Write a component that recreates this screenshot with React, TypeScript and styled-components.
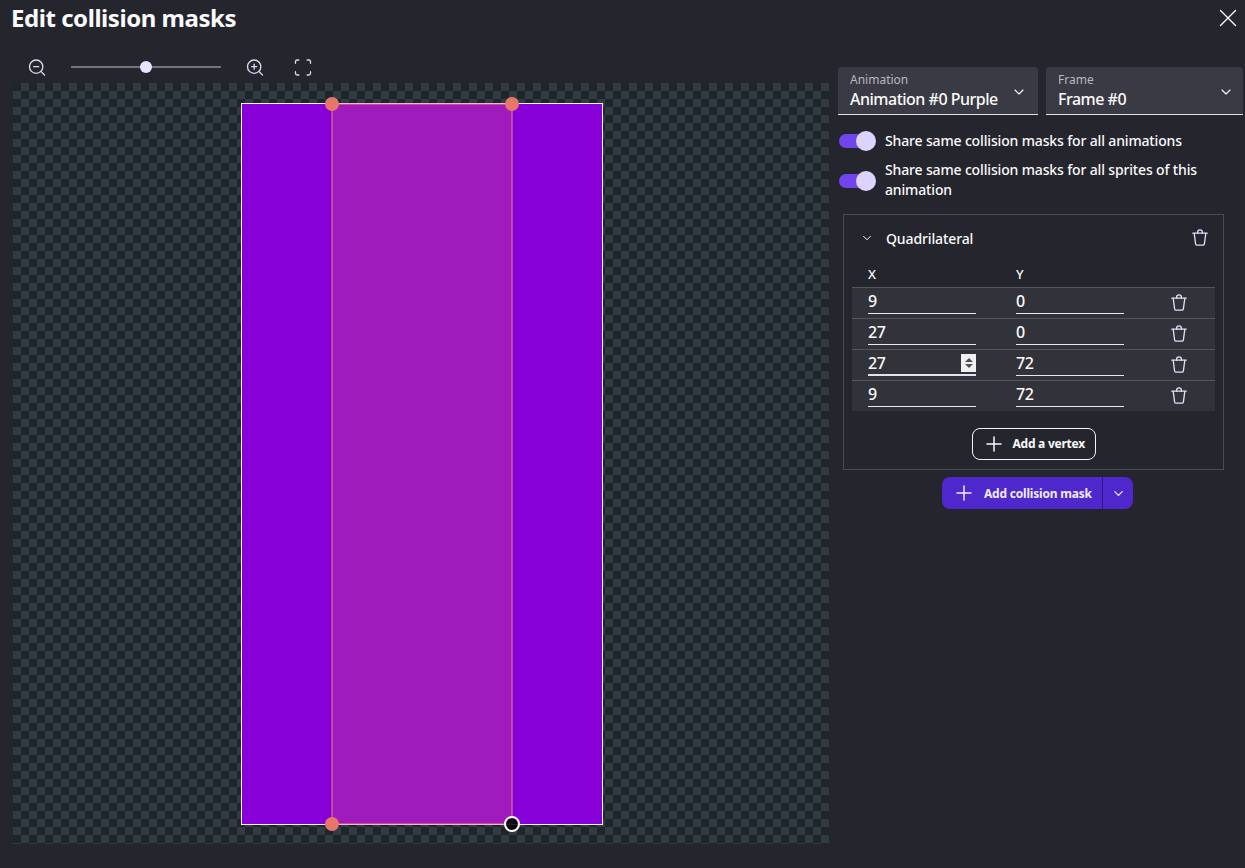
import { createGlobalStyle, styled } from 'styled-components'
import { ChevronDown, Plus, Scan, X, ZoomIn, ZoomOut } from 'lucide-react'

const GlobalStyle = createGlobalStyle`
  html, body {
    margin: 0;
    padding: 0;
    background: #25252e;
  }
  * {
    box-sizing: border-box;
  }
`

const Page = styled.div`
  width: 1245px;
  height: 868px;
  overflow: hidden;
  background: #25252e;
  color: #fafafa;
  font-family: 'Noto Sans', 'Liberation Sans', sans-serif;
  display: flex;
  flex-direction: column;
`

const TitleBar = styled.div`
  height: 36px;
  padding: 0 2px 0 11px;
  display: flex;
  align-items: center;
  justify-content: space-between;
`

const Title = styled.h1`
  margin: 0;
  font-size: 24px;
  line-height: 36px;
  font-weight: 700;
  letter-spacing: -0.45px;
`

const Body = styled.div`
  flex: 1;
  display: flex;
  padding-left: 13px;
  gap: 9px;
`

const Editor = styled.div`
  width: 816px;
  display: flex;
  flex-direction: column;
`

const Toolbar = styled.div`
  height: 47px;
  padding: 15px 0 0 14px;
  display: flex;
  align-items: center;
  color: #dcd8f0;
`

const ToolIcon = styled.span<{ $gap: number }>`
  width: 20px;
  height: 20px;
  margin-right: ${(p) => p.$gap}px;
  display: flex;
  align-items: center;
  justify-content: center;
`

const SliderTrack = styled.div`
  width: 150px;
  height: 2px;
  margin-right: 24px;
  background: #73727f;
  display: flex;
  align-items: center;
  justify-content: center;
`

const SliderThumb = styled.div`
  width: 12px;
  height: 12px;
  border-radius: 50%;
  background: #e8e4ff;
`

const Canvas = styled.div`
  width: 816px;
  height: 761px;
  flex: none;
  padding: 21px 0 0 1px;
  display: flex;
  justify-content: center;
  align-items: flex-start;
  background-color: #1f2629;
  background-image: conic-gradient(
    #303b44 25%,
    #1f2629 0 50%,
    #303b44 0 75%,
    #1f2629 0
  );
  background-size: 16px 16px;
`

const Sprite = styled.div`
  position: relative;
  width: 360px;
  height: 720px;
  background: #8800d8;
  outline: 1px solid #f4f4ff;
`

const MaskLayer = styled.svg`
  position: absolute;
  top: 0;
  left: 0;
  overflow: visible;
`

const Side = styled.div`
  width: 405px;
  padding-top: 31px;
  display: flex;
  flex-direction: column;
`

const SelectRow = styled.div`
  display: flex;
  gap: 8px;
  margin-bottom: 16px;
`

const Select = styled.div<{ $width: number }>`
  position: relative;
  width: ${(p) => p.$width}px;
  height: 48px;
  padding: 5px 12px 0;
  background: #3a3a44;
  border-bottom: 1px solid #e0e0e6;
  border-radius: 4px 4px 0 0;
`

const SelectLabel = styled.div`
  font-size: 12px;
  line-height: 15px;
  color: #b8b8c0;
`

const SelectValue = styled.div`
  font-size: 16px;
  line-height: 25px;
  font-weight: 500;
  letter-spacing: -0.5px;
  white-space: nowrap;
`

const SelectCaret = styled.span<{ $right: number }>`
  position: absolute;
  top: 17px;
  right: ${(p) => p.$right}px;
  display: flex;
`

const ToggleRow = styled.div`
  display: flex;
  align-items: center;
  gap: 9px;
  margin: 0 0 9px 1px;
`

const Toggle = styled.div<{ $low?: boolean }>`
  flex: none;
  width: 37px;
  height: 20px;
  margin-top: ${(p) => (p.$low ? 2 : 0)}px;
  position: relative;
  display: flex;
  align-items: center;
`

const ToggleTrack = styled.div`
  width: 31px;
  height: 14px;
  border-radius: 7px;
  background: #7046ec;
`

const ToggleThumb = styled.div`
  position: absolute;
  right: 0;
  top: 0;
  width: 20px;
  height: 20px;
  border-radius: 50%;
  background: #dcd3ff;
`

const ToggleLabel = styled.div`
  width: 325px;
  font-size: 14px;
  line-height: 20px;
  font-weight: 500;
  letter-spacing: -0.15px;
`

const MaskPanel = styled.div`
  width: 381px;
  height: 256px;
  margin: 5px 0 7px 5px;
  padding: 0 8px;
  border: 1px solid #4a4a52;
`

const PanelHeader = styled.div`
  height: 46px;
  padding: 0 6px 0 8px;
  display: flex;
  align-items: center;
`

const PanelTitle = styled.div`
  flex: 1;
  margin-left: 12px;
  font-size: 14px;
  font-weight: 500;
  letter-spacing: -0.12px;
`

const ColumnHeads = styled.div`
  height: 26px;
  padding-left: 16px;
  display: flex;
  align-items: center;
  font-size: 13px;
  font-weight: 500;
`

const ColumnHead = styled.div`
  width: 148px;
`

const VertexRow = styled.div`
  height: 31px;
  padding-left: 16px;
  display: flex;
  align-items: flex-start;
  background: #32323b;
  border-top: 1px solid #55555a;
  &:last-of-type {
    height: 32px;
    border-bottom: 1px solid #55555a;
  }
`

const VertexField = styled.div<{ $focused?: boolean }>`
  position: relative;
  width: 108px;
  height: 26px;
  margin-right: 40px;
  font-size: 16px;
  line-height: 26px;
  font-weight: 500;
  letter-spacing: -0.5px;
  border-bottom: ${(p) => (p.$focused ? '2px solid #dfe3ee' : '1px solid #e8e8f0')};
`

const Spinner = styled.div`
  position: absolute;
  right: 0;
  top: 4px;
  width: 15px;
  height: 18px;
  background: #f0f0f0;
  display: flex;
  flex-direction: column;
  align-items: center;
  justify-content: center;
  gap: 2px;
`

const Arrow = styled.span<{ $down?: boolean }>`
  width: 0;
  height: 0;
  border-left: 4px solid transparent;
  border-right: 4px solid transparent;
  border-top: ${(p) => (p.$down ? '4px solid #505050' : 'none')};
  border-bottom: ${(p) => (p.$down ? 'none' : '4px solid #505050')};
`

const RowAction = styled.span`
  margin: 6px 0 0 6px;
  display: flex;
  color: #e4def8;
`

const HeaderAction = styled.span`
  display: flex;
  color: #e4def8;
`

const PanelFooter = styled.div`
  padding-top: 17px;
  display: flex;
  justify-content: center;
`

const OutlineButton = styled.div`
  width: 124px;
  height: 32px;
  padding-left: 9px;
  display: flex;
  align-items: center;
  gap: 7px;
  border: 1px solid #f4f4f8;
  border-radius: 8px;
  font-size: 12px;
  line-height: 14px;
  font-weight: 700;
  letter-spacing: -0.25px;
  white-space: nowrap;
`

const SplitRow = styled.div`
  padding-left: 104px;
  display: flex;
`

const SplitButton = styled.div`
  height: 32px;
  width: 191px;
  display: flex;
  background: #4f28cd;
  border-radius: 8px;
  font-size: 12px;
  font-weight: 700;
  letter-spacing: -0.2px;
  color: #f0ecff;
  white-space: nowrap;
`

const SplitMain = styled.div`
  width: 161px;
  padding-left: 10px;
  display: flex;
  align-items: center;
  gap: 8px;
  border-right: 1px solid #2e1a80;
`

const SplitCaret = styled.div`
  flex: 1;
  display: flex;
  align-items: center;
  justify-content: center;
`

const Trash = ({ size = 18 }: { size?: number }) => (
  <svg width={size} height={size} viewBox="0 0 18 18" fill="none" stroke="currentColor" strokeWidth="1.3" strokeLinecap="round" strokeLinejoin="round">
    <path d="M1.8 4.2h14.4" />
    <path d="M6.6 4.2V3.2a2.4 2.4 0 0 1 4.8 0v1" />
    <path d="M3.2 4.4l1.4 10.4a1.6 1.6 0 0 0 1.6 1.4h5.6a1.6 1.6 0 0 0 1.6-1.4l1.4-10.4" />
  </svg>
)

const vertices = [
  { x: '9', y: '0' },
  { x: '27', y: '0' },
  { x: '27', y: '72', focused: true },
  { x: '9', y: '72' },
]

const App = () => {
  return (
    <Page>
      <GlobalStyle />
      <TitleBar>
        <Title>Edit collision masks</Title>
        <X size={30} strokeWidth={1.1} />
      </TitleBar>
      <Body>
        <Editor>
          <Toolbar>
            <ToolIcon $gap={24}>
              <ZoomOut size={21} strokeWidth={1.6} />
            </ToolIcon>
            <SliderTrack>
              <SliderThumb />
            </SliderTrack>
            <ToolIcon $gap={28}>
              <ZoomIn size={21} strokeWidth={1.6} />
            </ToolIcon>
            <ToolIcon $gap={0}>
              <Scan size={21} strokeWidth={1.6} />
            </ToolIcon>
          </Toolbar>
          <Canvas>
            <Sprite>
              <MaskLayer width="360" height="720" viewBox="0 0 360 720">
                <polygon points="90,0 270,0 270,720 90,720" fill="#ff8751" fillOpacity="0.2" stroke="#f27f8a" strokeWidth="1" />
                <circle cx="90" cy="0" r="7" fill="#e5766a" />
                <circle cx="270" cy="0" r="7" fill="#e5766a" />
                <circle cx="90" cy="720" r="7" fill="#e5766a" />
                <circle cx="270" cy="720" r="7" fill="#000" fillOpacity="0.85" stroke="#fff" strokeWidth="2" />
              </MaskLayer>
            </Sprite>
          </Canvas>
        </Editor>
        <Side>
          <SelectRow>
            <Select $width={200}>
              <SelectLabel>Animation</SelectLabel>
              <SelectValue>Animation #0 Purple</SelectValue>
              <SelectCaret $right={11}>
                <ChevronDown size={16} strokeWidth={1.7} />
              </SelectCaret>
            </Select>
            <Select $width={197}>
              <SelectLabel>Frame</SelectLabel>
              <SelectValue>Frame #0</SelectValue>
              <SelectCaret $right={9}>
                <ChevronDown size={16} strokeWidth={1.7} />
              </SelectCaret>
            </Select>
          </SelectRow>
          <ToggleRow>
            <Toggle>
              <ToggleTrack />
              <ToggleThumb />
            </Toggle>
            <ToggleLabel>Share same collision masks for all animations</ToggleLabel>
          </ToggleRow>
          <ToggleRow>
            <Toggle $low>
              <ToggleTrack />
              <ToggleThumb />
            </Toggle>
            <ToggleLabel>Share same collision masks for all sprites of this animation</ToggleLabel>
          </ToggleRow>
          <MaskPanel>
            <PanelHeader>
              <ChevronDown size={14} strokeWidth={1.7} />
              <PanelTitle>Quadrilateral</PanelTitle>
              <HeaderAction>
                <Trash />
              </HeaderAction>
            </PanelHeader>
            <ColumnHeads>
              <ColumnHead>X</ColumnHead>
              <ColumnHead>Y</ColumnHead>
            </ColumnHeads>
            {vertices.map((v, i) => (
              <VertexRow key={i}>
                <VertexField $focused={v.focused}>
                  {v.x}
                  {v.focused && (
                    <Spinner>
                      <Arrow />
                      <Arrow $down />
                    </Spinner>
                  )}
                </VertexField>
                <VertexField>{v.y}</VertexField>
                <RowAction>
                  <Trash />
                </RowAction>
              </VertexRow>
            ))}
            <PanelFooter>
              <OutlineButton>
                <Plus size={24} strokeWidth={1.5} />
                Add a vertex
              </OutlineButton>
            </PanelFooter>
          </MaskPanel>
          <SplitRow>
            <SplitButton>
              <SplitMain>
                <Plus size={24} strokeWidth={1.5} />
                Add collision mask
              </SplitMain>
              <SplitCaret>
                <ChevronDown size={15} strokeWidth={2} />
              </SplitCaret>
            </SplitButton>
          </SplitRow>
        </Side>
      </Body>
    </Page>
  )
}

export default App
